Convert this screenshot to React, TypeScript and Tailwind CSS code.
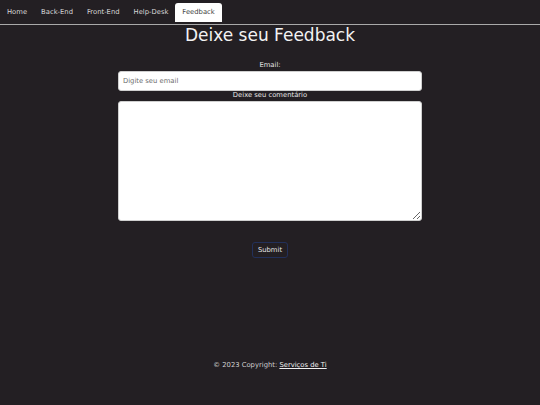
import React from "react";

const tabs = ["Home", "Back-End", "Front-End", "Help-Desk", "Feedback"];

export default function App() {
  return (
    <div
      className="min-h-[405px] bg-[#231f23] text-[#dedede]"
      style={{ fontFamily: '"DejaVu Sans", sans-serif' }}
    >
      <nav className="flex border-b border-[#a9a9a9] pt-[3px] pb-[2px]">
        {tabs.map((t) => (
          <div
            key={t}
            className={
              t === "Feedback"
                ? "flex h-[19px] items-center rounded-t-[3px] bg-white px-[7px] text-[6.8px] text-[#444]"
                : "flex h-[19px] items-center px-[7px] text-[6.8px] text-[#d8d8d8]"
            }
          >
            {t}
          </div>
        ))}
      </nav>
      <h1 className="text-center text-[17px] leading-[20px] text-[#f2f2f2]">
        Deixe seu Feedback
      </h1>
      <form className="mx-auto mt-[16px] flex w-[304px] flex-col">
        <label className="block text-center text-[6.8px] leading-[8px] text-[#e6e6e6]">
          Email:
        </label>
        <input
          type="email"
          placeholder="Digite seu email"
          className="mt-[2px] block h-[20px] w-full rounded-[3px] border border-[#cfcfcf] bg-white px-[4px] text-[6.8px] text-[#333] placeholder:text-[#6c6c6c] outline-none"
        />
        <label className="block text-center text-[6.8px] leading-[8px] text-[#e6e6e6]">
          Deixe seu comentário
        </label>
        <textarea className="mt-[2px] block h-[120px] w-full rounded-[3px] border border-[#cfcfcf] bg-white text-[6.8px] text-[#333] outline-none" />
        <div className="mt-[21px] flex justify-center">
          <button
            type="button"
            className="h-[16px] rounded-[3px] border border-[#22305a] bg-transparent px-[5px] text-[6.8px] leading-[8px] text-[#e6e6e6]"
          >
            Submit
          </button>
        </div>
      </form>
      <footer className="mt-[103px] text-center text-[6.8px] leading-[8px] text-[#d0d0d0]">
        © 2023 Copyright:{" "}
        <a className="text-[#f0f0f0] underline">Serviços de Ti</a>
      </footer>
    </div>
  );
}
